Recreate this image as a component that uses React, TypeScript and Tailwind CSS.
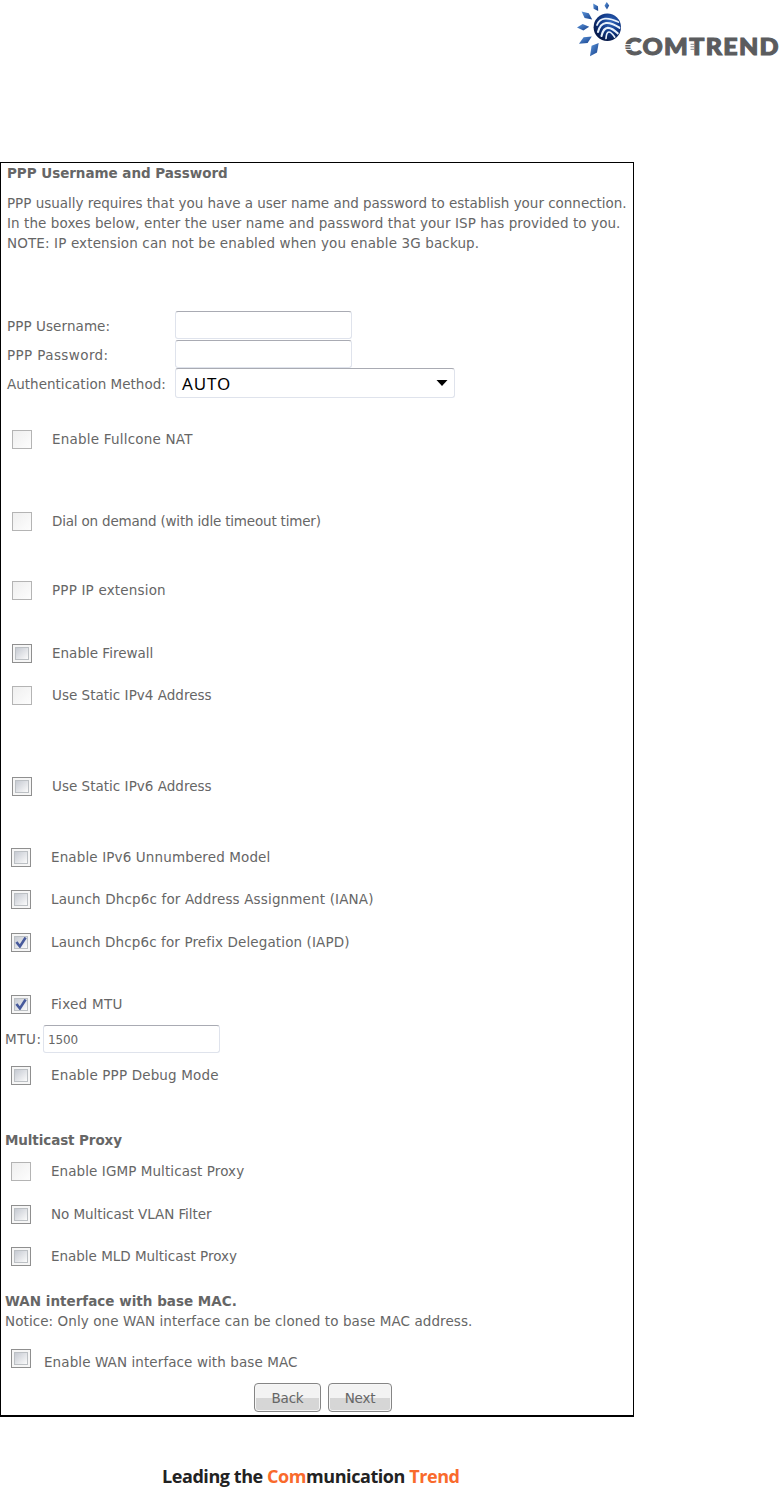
import React from "react";

type BoxKind = "off" | "disabled" | "on";

function Box({ kind }: { kind: BoxKind }) {
  if (kind === "disabled") {
    return (
      <span className="block h-[19px] w-5 shrink-0 border border-[#b4b4b4] bg-linear-to-br from-[#efefef] to-[#fdfdfd]" />
    );
  }
  return (
    <span className="block h-[19px] w-5 shrink-0 border border-[#8f8f8f] bg-[#f6f6f6] p-[2px]">
      <span className="block h-full w-full border border-[#bcc0c4] bg-linear-to-br from-[#c6cad2] to-[#fbfbfb]">
        {kind === "on" && (
          <svg viewBox="0 0 12 11" className="block h-[11px] w-3">
            <path d="M1.4 5 L4.9 9.4 L10.6 0.5" fill="none" stroke="#475a9c" strokeWidth="2.6" />
          </svg>
        )}
      </span>
    </span>
  );
}

function CheckRow({ kind, label, className }: { kind: BoxKind; label: string; className: string }) {
  return (
    <div className={`flex h-5 items-center gap-5 ${className}`}>
      <Box kind={kind} />
      <span className="pb-px">{label}</span>
    </div>
  );
}

const field =
  "block rounded-[3px] border border-[#dfe3ec] border-t-[#a9abb3] bg-white outline-none appearance-none";

function Logo() {
  return (
    <svg viewBox="570 0 210 65" className="block h-[65px] w-[210px]">
      <defs>
        <radialGradient id="globe" cx="0.62" cy="0.3" r="0.75">
          <stop offset="0" stopColor="#3569bd" />
          <stop offset="0.45" stopColor="#123c8c" />
          <stop offset="1" stopColor="#051440" />
        </radialGradient>
        <linearGradient id="ray" x1="0" y1="0" x2="1" y2="1">
          <stop offset="0" stopColor="#5f98dc" />
          <stop offset="1" stopColor="#123c88" />
        </linearGradient>
        <clipPath id="ball">
          <circle cx="607.3" cy="27.3" r="13" />
        </clipPath>
      </defs>
      <g fill="url(#ray)">
        <path d="M606.7 2 L609.2 5.6 L607 9.4 L604.5 5.8 Z" />
        <path d="M593.2 3.6 L598 6.2 L598.2 11 L593.6 8.8 Z" />
        <path d="M581.6 11.6 L588.8 13.2 L592.2 19.6 L584.6 17.9 Z" />
        <path d="M577 27.4 L582.6 24 L589.2 26.7 L583.4 30.4 Z" />
        <path d="M583.6 37.2 L591.8 36.4 L587.6 43 L579 43.8 Z" />
        <path d="M591.6 45.8 L598.7 43 L597 52.6 L590 56.2 Z" />
      </g>
      <circle cx="607.3" cy="27.3" r="13.7" fill="url(#globe)" />
      <g clipPath="url(#ball)" fill="none" stroke="#e8f1fb" strokeLinecap="round">
        <path d="M597 25 C600 17 608 17 618.5 22" strokeWidth="1.8" />
        <path d="M598 32 C601 20.5 609 21 620 28" strokeWidth="2.1" />
        <path d="M601.5 36 C604 25 610 26 618.5 34" strokeWidth="2.1" />
        <path d="M606 38.5 C606.5 30 610 30 615 37.5" strokeWidth="1.7" />
      </g>
      <text
        x="625"
        y="55.3"
        textLength="155"
        lengthAdjust="spacingAndGlyphs"
        fill="#5b5c5e"
        stroke="#5b5c5e"
        strokeWidth="1.1"
        className="font-['Lato',sans-serif] text-[23.5px] font-black tracking-[1.3px]"
      >
        COMTREND
      </text>
      <g stroke="#ffffff" strokeWidth="0.9">
        <path d="M624 44.5 H631 M624 47 H631 M624 49.5 H631" />
      </g>
      <path d="M690.5 44.3 H695 M690.5 46.8 H695 M690.5 49.3 H695" stroke="#85868a" strokeWidth="1" />
    </svg>
  );
}

const button =
  "h-[29px] rounded-[4px] border-[1.5px] border-[#858585] bg-linear-to-b from-[#f3f3f3] from-50% to-[#d6d6d6] to-52% text-center shadow-[inset_0_0_0_1px_#f6f6f6] tracking-[-0.2px]";

export default function App() {
  return (
    <div className="h-[1500px] w-[780px] overflow-hidden bg-white font-['DejaVu_Sans',sans-serif] text-[13.5px] leading-5 tracking-[0.09px] whitespace-nowrap text-[#666666]">
      <header className="flex h-[162px] justify-end">
        <Logo />
      </header>

      <main className="h-[1255px] w-[634px] border border-b-2 border-black">
        <section className="pl-[6px]">
          <h1 className="font-bold tracking-[-0.04px]">PPP Username and Password</h1>
          <div className="mt-[10px]">
            <p className="tracking-[-0.02px]">PPP usually requires that you have a user name and password to establish your connection.</p>
            <p className="tracking-[0.08px]">In the boxes below, enter the user name and password that your ISP has provided to you.</p>
            <p className="tracking-[0.13px]">NOTE: IP extension can not be enabled when you enable 3G backup.</p>
          </div>

          <div className="mt-[58px] grid grid-cols-[168px_280px] grid-rows-[28px_29px_30px] items-center">
            <label className="pt-px tracking-[0.08px]">PPP Username:</label>
            <input className={`${field} h-[28px] w-[177px]`} />
            <label className="pt-[2px] tracking-[0.4px]">PPP Password:</label>
            <input className={`${field} h-[28px] w-[177px]`} />
            <label className="pt-[2px] tracking-[0.01px]">Authentication Method:</label>
            <div className={`${field} flex h-[30px] w-[280px] items-center justify-between pr-[6px] pl-[6px] text-[17px] text-black`}>
              <span className="pt-[2px] font-['Noto_Sans',sans-serif] tracking-[0.9px]">AUTO</span>
              <svg viewBox="0 0 12 6" className="h-[6px] w-3">
                <path d="M0.5 0 H11.5 L6 6 Z" />
              </svg>
            </div>
          </div>

          <div className="pl-[5px]">
            <CheckRow kind="disabled" label="Enable Fullcone NAT" className="mt-[31px] tracking-[0.21px]" />
            <CheckRow kind="disabled" label="Dial on demand (with idle timeout timer)" className="mt-[62px] tracking-[-0.19px]" />
            <CheckRow kind="disabled" label="PPP IP extension" className="mt-[49px] tracking-[0.18px]" />
            <CheckRow kind="off" label="Enable Firewall" className="mt-[43px] tracking-[0.01px]" />
            <CheckRow kind="disabled" label="Use Static IPv4 Address" className="mt-[22px] tracking-[0.02px]" />
            <CheckRow kind="off" label="Use Static IPv6 Address" className="mt-[71px] tracking-[0.02px]" />
          </div>
        </section>

        <section className="pl-1">
          <div className="pl-[6px]">
            <CheckRow kind="off" label="Enable IPv6 Unnumbered Model" className="mt-[51px] tracking-[0.13px]" />
            <CheckRow kind="off" label="Launch Dhcp6c for Address Assignment (IANA)" className="mt-[22px] tracking-[0.15px]" />
            <CheckRow kind="on" label="Launch Dhcp6c for Prefix Delegation (IAPD)" className="mt-[23px] tracking-[0.12px]" />
            <CheckRow kind="on" label="Fixed MTU" className="mt-[42px] tracking-[0.3px]" />
          </div>
          <div className="mt-[11px] flex items-center">
            <label className="w-[38px] tracking-[0.6px]">MTU:</label>
            <input className={`${field} h-[28px] w-[177px] px-1 pt-[2px] text-[12px] tracking-[-0.1px]`} defaultValue="1500" />
          </div>
          <div className="pl-[6px]">
            <CheckRow kind="off" label="Enable PPP Debug Mode" className="mt-[12px] tracking-[0.15px]" />
          </div>

          <h2 className="mt-[45px] font-bold tracking-[-0.1px]">Multicast Proxy</h2>
          <div className="pl-[6px]">
            <CheckRow kind="disabled" label="Enable IGMP Multicast Proxy" className="mt-[11px] tracking-[0.08px]" />
            <CheckRow kind="off" label="No Multicast VLAN Filter" className="mt-[23px] tracking-[-0.07px]" />
            <CheckRow kind="off" label="Enable MLD Multicast Proxy" className="mt-[22px] tracking-[-0.02px]" />
          </div>

          <h2 className="mt-[25px] font-bold tracking-[0.01px]">WAN interface with base MAC.</h2>
          <p className="tracking-[0.08px]">Notice: Only one WAN interface can be cloned to base MAC address.</p>
          <div className="mt-[18px] flex h-6 gap-[13px] pl-[6px]">
            <Box kind="off" />
            <span className="pt-[3px] tracking-[0.09px]">Enable WAN interface with base MAC</span>
          </div>
        </section>

        <div className="mt-[10px] flex gap-[7px] pl-[253px]">
          <button className={`${button} w-[67px]`}>Back</button>
          <button className={`${button} w-[64px]`}>Next</button>
        </div>
      </main>

      <footer className="pt-[47px] pl-[162px] font-['Open_Sans',sans-serif] text-[18px] leading-6 font-bold tracking-[-0.43px] text-[#222222]">
        Leading the <span className="text-[#f96a2c]">Com</span>munication <span className="text-[#f96a2c]">Trend</span>
      </footer>
    </div>
  );
}
